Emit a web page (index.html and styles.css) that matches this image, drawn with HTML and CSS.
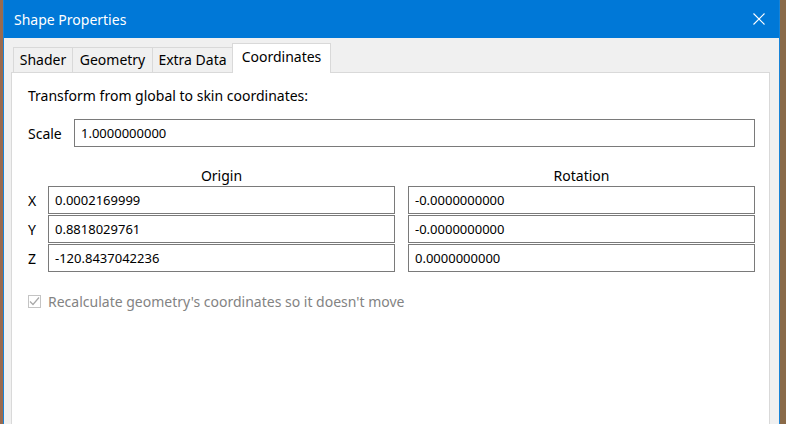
FILE: index.html
```html
<!DOCTYPE html>
<html lang="en">
<head>
    <meta charset="UTF-8">
    <title>Shape Properties</title>
    <link rel="stylesheet" href="styles.css">
</head>
<body>
    <div class="window">
        <div class="titlebar">
            <span class="title">Shape Properties</span>
            <svg class="close" width="12" height="12" viewBox="0 0 12 12">
                <path d="M0.5 0.5 L11.5 11.5 M11.5 0.5 L0.5 11.5" stroke="#fff" stroke-width="1.1" fill="none"/>
            </svg>
        </div>
        <div class="client">
            <div class="tabs">
                <div class="tab t-shader">Shader</div>
                <div class="tab t-geometry">Geometry</div>
                <div class="tab t-extra">Extra Data</div>
                <div class="tab t-coords active">Coordinates</div>
            </div>
            <div class="panel">
                <p class="caption">Transform from global to skin coordinates:</p>
                <div class="scale-row">
                    <span class="label">Scale</span>
                    <input class="field" type="text" value="1.0000000000">
                </div>
                <div class="row heads">
                    <span class="axis"></span>
                    <span class="head">Origin</span>
                    <span class="head">Rotation</span>
                </div>
                <div class="row">
                    <span class="axis">X</span>
                    <input class="field" type="text" value="0.0002169999">
                    <input class="field" type="text" value="-0.0000000000">
                </div>
                <div class="row">
                    <span class="axis">Y</span>
                    <input class="field" type="text" value="0.8818029761">
                    <input class="field" type="text" value="-0.0000000000">
                </div>
                <div class="row">
                    <span class="axis">Z</span>
                    <input class="field" type="text" value="-120.8437042236">
                    <input class="field" type="text" value="0.0000000000">
                </div>
                <label class="check">
                    <span class="box">
                        <svg width="11" height="11" viewBox="0 0 11 11">
                            <path d="M1 5.5 L4 8.5 L10 1.5" stroke="#a8a8a8" stroke-width="1.2" fill="none"/>
                        </svg>
                    </span>
                    Recalculate geometry's coordinates so it doesn't move
                </label>
            </div>
        </div>
    </div>
</body>
</html>
```

FILE: styles.css
```css
body {
    margin: 0;
    height: 424px;
    overflow: hidden;
    background: linear-gradient(90deg, #9a6a4e 0, #8a6a48 100%);
    font-family: "Noto Sans", "Open Sans", sans-serif;
    font-size: 14px;
    color: #000;
}
.window {
    margin-left: 3px;
    width: 775px;
    height: 440px;
    border: 1px solid #1883d7;
    border-top: none;
    background: #f0f0f0;
}
.titlebar {
    height: 38px;
    background: #0078d7;
    display: flex;
    align-items: center;
    justify-content: space-between;
    padding: 0 14px 0 10px;
    color: #fff;
}
.title {
    font-size: 14px;
}
.close {
    display: block;
}
.client {
    padding: 6px 9px 0 7px;
}
.tabs {
    display: flex;
    align-items: flex-end;
    padding-left: 2px;
    height: 28px;
}
.tab {
    height: 24px;
    line-height: 23px;
    text-align: center;
    border: 1px solid #d9d9d9;
    border-bottom: none;
    margin-right: -1px;
    background: #f0f0f0;
    box-sizing: content-box;
}
.t-shader { width: 58px; }
.t-geometry { width: 79px; }
.t-extra { width: 79px; }
.t-coords { width: 97px; }
.tab.active {
    position: relative;
    z-index: 1;
    height: 29px;
    line-height: 26px;
    margin-bottom: -1px;
    background: #fff;
}
.panel {
    background: #fff;
    border: 1px solid #d9d9d9;
    height: 360px;
    padding: 0 14px 0 16px;
}
.caption {
    margin: 13px 0 0;
    line-height: 20px;
}
.scale-row {
    display: flex;
    align-items: center;
    margin-top: 13px;
}
.label {
    width: 46px;
}
.field {
    flex: 1;
    min-width: 0;
    height: 28px;
    box-sizing: border-box;
    border: 1px solid #7a7a7a;
    padding: 0 6px;
    font-family: inherit;
    font-size: 13px;
    color: #000;
    background: #fff;
    margin: 0;
}
.row {
    display: flex;
    align-items: center;
    margin-top: 1px;
}
.row.heads {
    margin-top: 18px;
    height: 20px;
    margin-bottom: 1px;
}
.axis {
    width: 20px;
}
.row .field + .field,
.head + .head {
    margin-left: 13px;
}
.head {
    flex: 1;
    text-align: center;
}
.check {
    display: flex;
    align-items: center;
    gap: 7px;
    margin-top: 20px;
    color: #838383;
}
.box {
    width: 13px;
    height: 13px;
    box-sizing: border-box;
    border: 1px solid #c4c4c4;
    display: flex;
    align-items: center;
    justify-content: center;
}
```
